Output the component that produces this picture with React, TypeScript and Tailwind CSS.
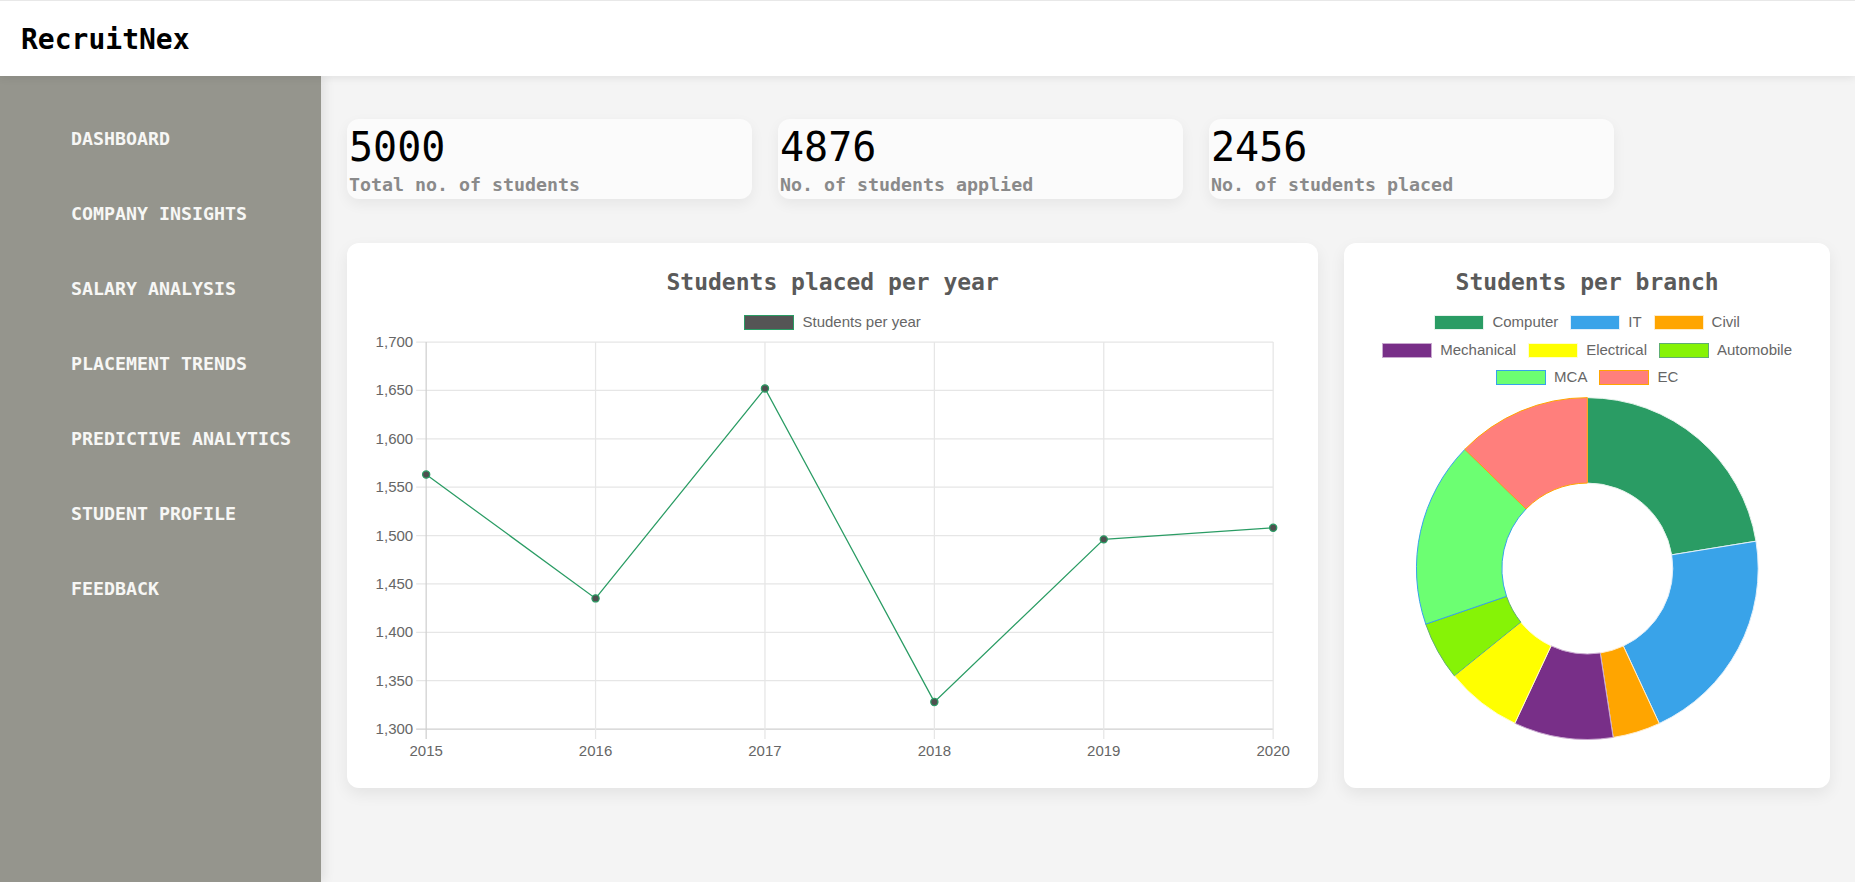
import React from 'react';

const navItems = [
  'DASHBOARD',
  'COMPANY INSIGHTS',
  'SALARY ANALYSIS',
  'PLACEMENT TRENDS',
  'PREDICTIVE ANALYTICS',
  'STUDENT PROFILE',
  'FEEDBACK',
];

const stats = [
  { value: '5000', label: 'Total no. of students' },
  { value: '4876', label: 'No. of students applied' },
  { value: '2456', label: 'No. of students placed' },
];

const yearly = [
  { year: '2015', value: 1563 },
  { year: '2016', value: 1435 },
  { year: '2017', value: 1652 },
  { year: '2018', value: 1328 },
  { year: '2019', value: 1496 },
  { year: '2020', value: 1508 },
];

const branches = [
  { name: 'Computer', fill: '#2a9c64', border: '#e6f3ec', from: 0, to: 80.8 },
  { name: 'IT', fill: '#39a3e9', border: '#e2effa', from: 80.8, to: 155.1 },
  { name: 'Civil', fill: '#ffa500', border: '#ffeccc', from: 155.1, to: 171.3 },
  { name: 'Mechanical', fill: '#782f88', border: '#c9a9d0', from: 171.3, to: 205.1 },
  { name: 'Electrical', fill: '#ffff00', border: '#ffffcc', from: 205.1, to: 231.1 },
  { name: 'Automobile', fill: '#86f306', border: '#5fae72', from: 231.1, to: 251 },
  { name: 'MCA', fill: '#6cff72', border: '#36a2eb', from: 251, to: 314.2 },
  { name: 'EC', fill: '#ff7f7c', border: '#ffa500', from: 314.2, to: 360 },
];

const legendRows = [
  ['Computer', 'IT', 'Civil'],
  ['Mechanical', 'Electrical', 'Automobile'],
  ['MCA', 'EC'],
];

// chart geometry (px, inside the svg)
const plotLeft = 79;
const plotRight = 926;
const plotTop = 12;
const plotBottom = 399;
const yMin = 1300;
const yMax = 1700;

const xAt = (i: number) => plotLeft + (i * (plotRight - plotLeft)) / (yearly.length - 1);
const yAt = (v: number) => plotTop + ((yMax - v) / (yMax - yMin)) * (plotBottom - plotTop);

const polar = (cx: number, cy: number, r: number, deg: number) => {
  const a = ((deg - 90) * Math.PI) / 180;
  return [cx + r * Math.cos(a), cy + r * Math.sin(a)];
};

const arcPath = (cx: number, cy: number, r0: number, r1: number, a0: number, a1: number) => {
  const large = a1 - a0 > 180 ? 1 : 0;
  const [x1, y1] = polar(cx, cy, r1, a0);
  const [x2, y2] = polar(cx, cy, r1, a1);
  const [x3, y3] = polar(cx, cy, r0, a1);
  const [x4, y4] = polar(cx, cy, r0, a0);
  return `M${x1} ${y1} A${r1} ${r1} 0 ${large} 1 ${x2} ${y2} L${x3} ${y3} A${r0} ${r0} 0 ${large} 0 ${x4} ${y4} Z`;
};

const LineChart: React.FC = () => {
  const ticks = [1700, 1650, 1600, 1550, 1500, 1450, 1400, 1350, 1300];
  const points = yearly.map((d, i) => `${xAt(i)},${yAt(d.value)}`).join(' ');
  return (
    <svg width="100%" height="458" viewBox="0 0 971 458" className="block">
      {/* horizontal grid */}
      {ticks.map((t, i) => (
        <g key={t}>
          <line
            x1={plotLeft - 10}
            x2={plotRight}
            y1={yAt(t)}
            y2={yAt(t)}
            stroke={i === ticks.length - 1 ? '#cfcfcf' : '#e6e6e6'}
            strokeWidth="1.25"
          />
          <text
            x={plotLeft - 13}
            y={yAt(t) + 5}
            textAnchor="end"
            fontSize="15"
            fill="#666"
            fontFamily="'Liberation Sans', Arial, sans-serif"
          >
            {t.toLocaleString('en-US')}
          </text>
        </g>
      ))}
      {/* vertical grid */}
      {yearly.map((d, i) => (
        <g key={d.year}>
          <line
            x1={xAt(i)}
            x2={xAt(i)}
            y1={plotTop}
            y2={plotBottom + 10}
            stroke={i === 0 ? '#cfcfcf' : '#e6e6e6'}
            strokeWidth="1.25"
          />
          <text
            x={xAt(i)}
            y={plotBottom + 27}
            textAnchor="middle"
            fontSize="15"
            fill="#666"
            fontFamily="'Liberation Sans', Arial, sans-serif"
          >
            {d.year}
          </text>
        </g>
      ))}
      <polyline points={points} fill="none" stroke="#2a9c64" strokeWidth="1.25" />
      {yearly.map((d, i) => (
        <circle key={d.year} cx={xAt(i)} cy={yAt(d.value)} r="3.6" fill="#4f4f4f" stroke="#2a9c64" strokeWidth="1.25" />
      ))}
    </svg>
  );
};

const Doughnut: React.FC = () => (
  <svg width="100%" height="399" viewBox="0 0 486 399" className="block">
    {branches.map((b) => (
      <path
        key={b.name}
        d={arcPath(243.5, 179.5, 85.5, 171, b.from, b.to)}
        fill={b.fill}
        stroke={b.border}
        strokeWidth="1"
      />
    ))}
  </svg>
);

const App: React.FC = () => {
  return (
    <div className="min-h-screen bg-[#f4f4f4] font-['DejaVu_Sans_Mono',monospace]">
      {/* Header */}
      <header className="relative z-20 h-[76px] bg-white border-t border-[#e8e8e8] flex items-center px-[21px] pt-[3px] shadow-[0_2px_8px_rgba(0,0,0,0.08)]">
        <h1 className="text-[28px] font-bold text-black">RecruitNex</h1>
      </header>

      <div className="flex">
        {/* Sidebar */}
        <aside className="relative z-10 w-[321px] shrink-0 min-h-[806px] bg-[#95958d] shadow-[4px_0_10px_rgba(0,0,0,0.08)] pt-[25px]">
          <nav className="flex flex-col">
            {navItems.map((item) => (
              <a key={item} href="#" className="h-[75px] flex items-center pl-[71px] text-[18.3px] font-bold text-[#f7f7f5]">
                {item}
              </a>
            ))}
          </nav>
        </aside>

        {/* Main */}
        <main className="flex-1 pl-[26px] pr-[25px] pt-[43px]">
          <div className="flex gap-[26px]">
            {stats.map((s) => (
              <div
                key={s.label}
                className="w-[405px] h-[80px] rounded-[12px] bg-[#fbfbfb] shadow-[0_5px_14px_rgba(0,0,0,0.06)] px-[2px] pt-[5px]"
              >
                <div className="text-[40px] leading-[46px] text-black">{s.value}</div>
                <div className="mt-[3px] text-[18.3px] leading-[24px] font-bold text-[#8a8a8a]">{s.label}</div>
              </div>
            ))}
          </div>

          <div className="mt-[44px] grid grid-cols-[2fr_1fr] gap-[26px]">
            {/* Line chart card */}
            <section className="h-[545px] rounded-[12px] bg-white shadow-[0_6px_16px_rgba(0,0,0,0.07)] pt-[25px]">
              <h2 className="text-center text-[23px] leading-[28px] font-bold text-[#5a5a5a]">Students placed per year</h2>
              <div className="mt-[19px] flex justify-center items-center h-[15px] font-['Liberation_Sans',Arial,sans-serif] text-[15px] text-[#666]">
                <span className="w-[50px] h-[15px] bg-[#555] border border-[#2a9c64] mr-[8px]" />
                <span>Students per year</span>
              </div>
              <LineChart />
            </section>

            {/* Doughnut card */}
            <section className="h-[545px] rounded-[12px] bg-white shadow-[0_6px_16px_rgba(0,0,0,0.07)] pt-[25px]">
              <h2 className="text-center text-[23px] leading-[28px] font-bold text-[#5a5a5a]">Students per branch</h2>
              <div className="mt-[19px] flex flex-col gap-[12.5px] font-['Liberation_Sans',Arial,sans-serif] text-[15px] text-[#666]">
                {legendRows.map((row) => (
                  <div key={row.join()} className="flex justify-center items-center h-[15px] gap-[12px]">
                    {row.map((name) => {
                      const b = branches.find((x) => x.name === name)!;
                      return (
                        <div key={name} className="flex items-center">
                          <span
                            className="w-[50px] h-[15px] border mr-[8px]"
                            style={{ backgroundColor: b.fill, borderColor: b.border }}
                          />
                          <span>{name}</span>
                        </div>
                      );
                    })}
                  </div>
                ))}
              </div>
              <div className="mt-[4px]">
                <Doughnut />
              </div>
            </section>
          </div>
        </main>
      </div>
    </div>
  );
};

export default App;
